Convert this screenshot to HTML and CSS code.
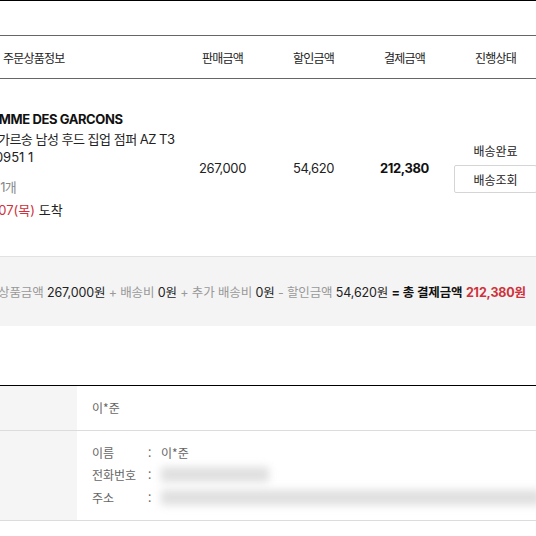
FILE: index.html
```html
<!DOCTYPE html>
<html lang="ko">
<head>
<meta charset="utf-8">
<link rel="stylesheet" href="styles.css">
</head>
<body>
<div class="page">
  <div class="topline"></div>
  <div class="order">
    <div class="thead">
      <div class="col col-info th-info">주문상품정보</div>
      <div class="col col-num">판매금액</div>
      <div class="col col-num">할인금액</div>
      <div class="col col-num">결제금액</div>
      <div class="col col-num">진행상태</div>
    </div>
    <div class="trow">
      <div class="col col-info prod">
        <div class="prod-inner">
          <div class="brand">COMME DES GARCONS</div>
          <div class="pname">꼼데가르송 남성 후드 집업 점퍼 AZ T3<br><span class="code">MZ0951 1</span></div>
          <div class="qty">수량 1개</div>
          <div class="arrive"><span class="red">11/07(목)</span> 도착</div>
        </div>
      </div>
      <div class="col col-num num">267,000</div>
      <div class="col col-num num">54,620</div>
      <div class="col col-num num bold">212,380</div>
      <div class="col col-num status">
        <div class="st-label">배송완료</div>
        <button class="btn">배송조회</button>
      </div>
    </div>
    <div class="summary">
      <div class="sum-line">
        <span class="g">총 상품금액</span> <span class="d">267,000원</span>
        <span class="g">+ 배송비</span> <span class="d">0원</span>
        <span class="g">+ 추가 배송비</span> <span class="d">0원</span>
        <span class="g">- 할인금액</span> <span class="d">54,620원</span>
        <span class="b">= 총 결제금액</span> <span class="r">212,380원</span>
      </div>
    </div>
  </div>

  <div class="info">
    <div class="irow irow-1">
      <div class="ilabel"></div>
      <div class="ival">이*준</div>
    </div>
    <div class="irow irow-2">
      <div class="ilabel"></div>
      <div class="ival">
        <div class="addr">
          <span class="k">이름</span><span class="c">:</span><span class="v">이*준</span>
          <span class="k">전화번호</span><span class="c">:</span><span class="v"><span class="blur blur-phone"></span></span>
          <span class="k">주소</span><span class="c">:</span><span class="v"><span class="blur blur-addr"></span></span>
        </div>
      </div>
    </div>
  </div>
</div>
</body>
</html>
```

FILE: styles.css
```css
html, body {
  margin: 0;
  padding: 0;
  background: #fff;
  overflow: hidden;
}
body {
  font-family: Inter, "Noto Sans CJK KR", sans-serif;
  color: #222;
  width: 536px;
}
.page {
  width: 536px;
  overflow: hidden;
}
.topline {
  height: 1px;
  background: #000;
}
.order {
  width: 541px;
  margin-top: 34px;
}
.thead {
  display: flex;
  height: 42px;
  align-items: center;
  border-top: 1px solid #666;
  border-bottom: 1px solid #666;
  font-family: "Noto Sans CJK KR", sans-serif;
  font-size: 12px;
  letter-spacing: -0.8px;
  color: #222;
}
.col {
  min-width: 0;
  box-sizing: border-box;
}
.col-info {
  flex: 0 0 177px;
}
.col-num {
  flex: 0 0 91px;
  text-align: center;
}
.th-info {
  padding-left: 3px;
}
.trow {
  display: flex;
  height: 177px;
  align-items: center;
  border-bottom: 1px solid #e2e2e2;
}
.prod {
  align-self: flex-start;
  padding-top: 31px;
  white-space: nowrap;
}
.prod-inner {
  margin-left: -25px;
  font-size: 13px;
}
.brand {
  font-weight: 700;
  line-height: 18px;
  color: #111;
  margin-left: 5px;
  letter-spacing: -0.4px;
}
.pname {
  margin-top: 2px;
  line-height: 18px;
  color: #222;
  letter-spacing: -0.5px;
}
.code {
  letter-spacing: 0;
}
.qty {
  margin-top: 12px;
  line-height: 18px;
  color: #888;
  letter-spacing: -0.8px;
}
.arrive {
  margin-top: 5px;
  line-height: 18px;
  color: #222;
  padding-left: 8px;
}
.red {
  color: #d0313a;
}
.num {
  font-size: 13px;
  letter-spacing: -0.4px;
  color: #222;
}
.bold {
  font-weight: 700;
  color: #111;
}
.status {
  display: flex;
  flex-direction: column;
  align-items: flex-start;
  padding-left: 4px;
}
.st-label {
  width: 83px;
  text-align: center;
  font-size: 12px;
  line-height: 18px;
  color: #222;
  font-family: "Noto Sans CJK KR", sans-serif;
}
.btn {
  margin-top: 5px;
  width: 83px;
  height: 28px;
  border: 1px solid #d5d5d5;
  border-radius: 2px;
  background: #fff;
  font-family: "Noto Sans CJK KR", sans-serif;
  font-size: 12px;
  color: #222;
  padding: 0;
}
.summary {
  height: 69px;
  background: #f4f4f4;
  display: flex;
  align-items: center;
  justify-content: flex-end;
  padding-right: 15px;
}
.sum-line {
  white-space: nowrap;
  font-size: 12.5px;
  letter-spacing: -0.13px;
  flex: none;
}
.g { color: #999; }
.d { color: #222; }
.b { color: #111; font-weight: 700; }
.r { color: #d0313a; font-weight: 700; }

.info {
  margin-top: 59px;
  border-top: 1px solid #000;
  font-family: "Noto Sans CJK KR", sans-serif;
  font-size: 12px;
  color: #666;
}
.irow {
  display: flex;
  border-bottom: 1px solid #dcdcdc;
}
.ilabel {
  flex: 0 0 77px;
  background: #f5f5f5;
}
.ival {
  flex: 1;
  min-width: 0;
  padding-left: 15px;
}
.irow-1 {
  height: 44px;
}
.irow-1 .ival {
  display: flex;
  align-items: center;
  padding-bottom: 2px;
  box-sizing: border-box;
}
.irow-2 .ival {
  padding-top: 10px;
  padding-bottom: 11px;
  height: 68px;
}
.addr {
  display: grid;
  grid-template-columns: 56px 13px 1fr;
  grid-auto-rows: 22.5px;
  align-items: center;
}
.v {
  display: flex;
  align-items: center;
}
.blur {
  display: block;
  background: #d4d4d4;
  filter: blur(4px);
  opacity: 0.75;
  height: 15px;
}
.blur-phone {
  width: 108px;
}
.blur-addr {
  width: 380px;
}
```
